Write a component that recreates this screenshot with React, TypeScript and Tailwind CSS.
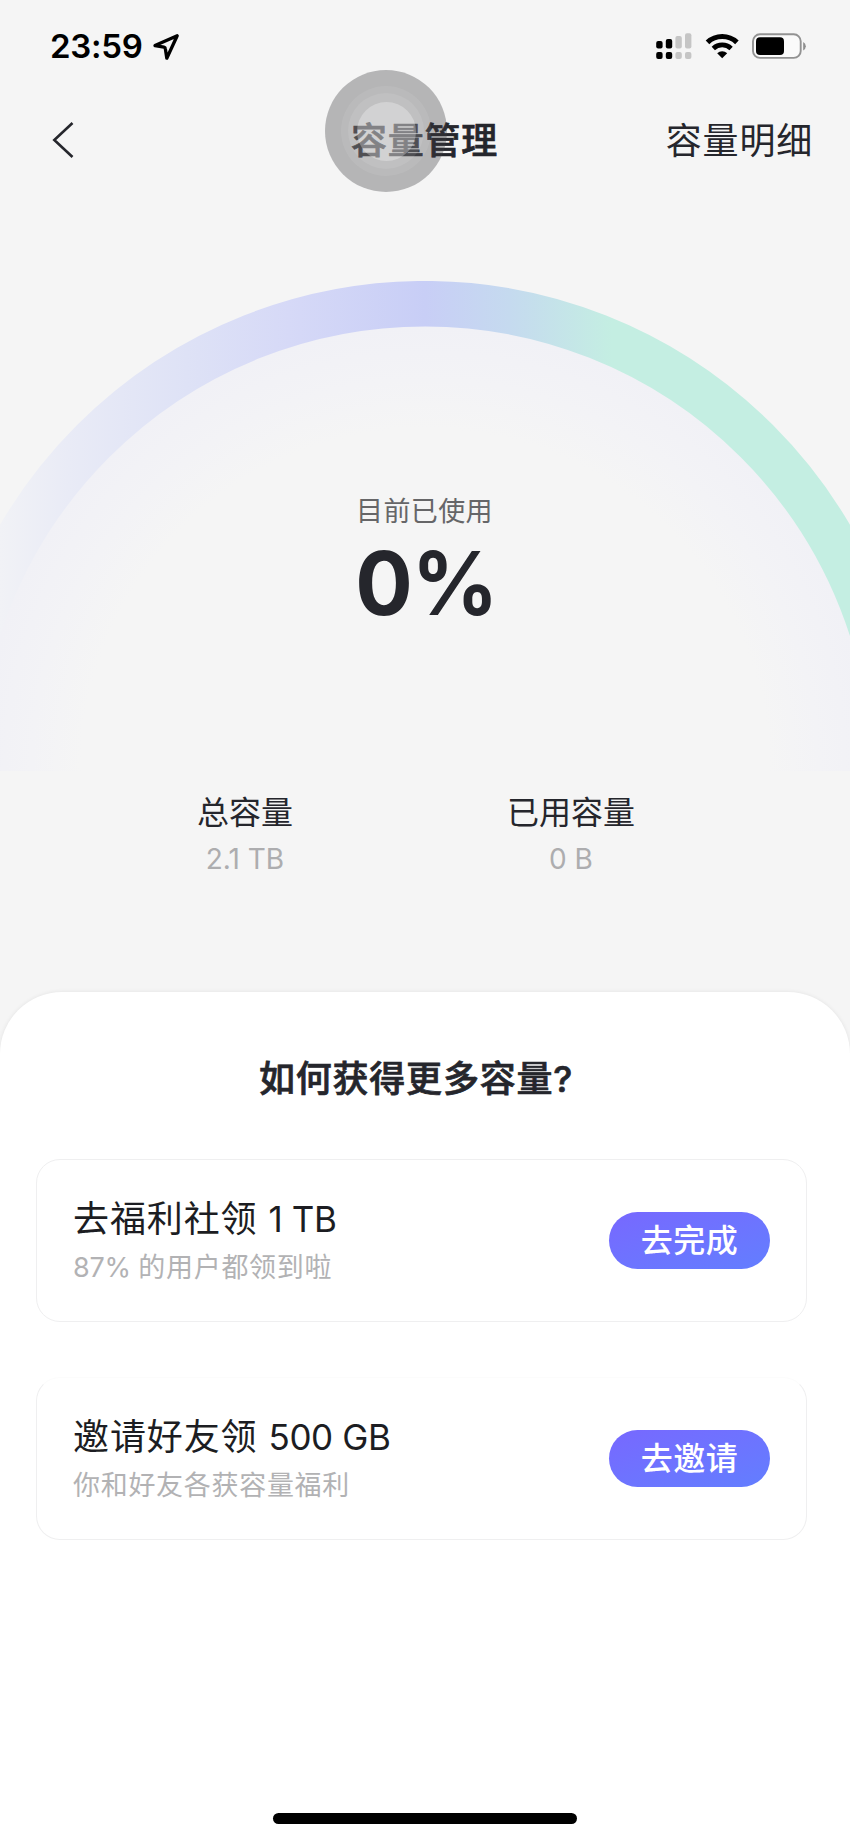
import React from 'react';

interface Task {
  title: string;
  amount: string;
  rate?: string;
  note: string;
  action: string;
  topBorder: boolean;
}

interface Stat {
  label: string;
  value: string;
}

const tasks: Task[] = [
  { title: '去福利社领', amount: '1 TB', rate: '87%', note: '的用户都领到啦', action: '去完成', topBorder: true },
  { title: '邀请好友领', amount: '500 GB', note: '你和好友各获容量福利', action: '去邀请', topBorder: false },
];

const stats: Stat[] = [
  { label: '总容量', value: '2.1 TB' },
  { label: '已用容量', value: '0 B' },
];

const StatusBar: React.FC = () => (
  <div className="flex h-[92px] items-center pl-[50px] pr-[44px] text-black">
    <span className="pt-px text-[33px] font-semibold leading-none tracking-[-0.3px]">23:59</span>
    <svg className="ml-[9px]" width="30" height="30" viewBox="151 31 30 30" fill="none">
      <path
        d="M177.2 35.7 155 45.6l9 1.5q1.2.2 1.3 1.3l1.5 9.8z"
        stroke="black"
        strokeWidth="3.3"
        strokeLinejoin="round"
      />
    </svg>
    <div className="ml-auto flex items-center">
      <svg width="36" height="28" viewBox="656 32 36 28">
        <rect x="656.2" y="41" width="6.4" height="7.6" rx="2" />
        <rect x="665.8" y="39" width="6.4" height="9.6" rx="2" />
        <rect x="656.2" y="52" width="6.4" height="7" rx="2" />
        <rect x="665.8" y="52" width="6.4" height="7" rx="2" />
        <g fill="#c5c5c5">
          <rect x="675.4" y="36" width="6.4" height="12.6" rx="2" />
          <rect x="685" y="33.3" width="6.4" height="15.3" rx="2" />
          <rect x="675.4" y="52" width="6.4" height="7" rx="2" />
          <rect x="685" y="52" width="6.4" height="7" rx="2" />
        </g>
      </svg>
      <svg className="ml-[13px]" width="34" height="28" viewBox="705 32 34 28" fill="none">
        <path d="M707.5 42.3a21.5 21.5 0 0 1 29.4 0" stroke="black" strokeWidth="5.2" />
        <path d="M713.3 48.4a13 13 0 0 1 17.8 0" stroke="black" strokeWidth="4.8" />
        <path d="M717.2 53.2a7.4 7.4 0 0 1 10 0l-5 5z" fill="black" />
      </svg>
      <svg className="ml-[12px]" width="55" height="28" viewBox="751 32 55 28">
        <rect x="753" y="34.3" width="47.7" height="23.6" rx="7" fill="#fafafa" stroke="#929292" strokeWidth="1.9" />
        <rect x="756" y="37.3" width="28" height="17.6" rx="4" />
        <path d="M803.2 42v8.4q2.6-1.4 2.6-4.2t-2.6-4.2" fill="#8e8e8e" />
      </svg>
    </div>
  </div>
);

const AssistiveTouch: React.FC = () => (
  <div className="absolute left-[325px] top-[70px] flex size-[122px] items-center justify-center rounded-full bg-[#3f3f42]/35">
    <div className="flex size-[90px] items-center justify-center rounded-full bg-white/8">
      <div className="flex size-[76px] items-center justify-center rounded-full bg-white/9">
        <div className="size-[59px] rounded-full bg-white/29" />
      </div>
    </div>
  </div>
);

const Header: React.FC = () => (
  <div className="grid h-[96px] grid-cols-3 items-center pl-[51px] pr-[37px] text-[36px] leading-none tracking-[0.8px] text-[#25262c]">
    <svg width="24" height="40" viewBox="51 120 24 40" fill="none">
      <path d="M72.5 123 54.3 140l18.2 17" stroke="currentColor" strokeWidth="2.6" />
    </svg>
    <h1 className="whitespace-nowrap pr-[15px] pt-[2px] text-center font-medium [-webkit-text-stroke:0.7px]">容量管理</h1>
    <span className="whitespace-nowrap pt-[2px] text-right">容量明细</span>
  </div>
);

const Gauge: React.FC = () => (
  <div className="relative mt-[93px] h-[490px]">
    <svg className="absolute inset-0" width="850" height="490" viewBox="0 0 850 490">
      <defs>
        <linearGradient id="ring" gradientUnits="userSpaceOnUse" x1="0" y1="0" x2="850" y2="0">
          <stop offset="0" stopColor="#f1f2f6" />
          <stop offset="0.08" stopColor="#e9ebf6" />
          <stop offset="0.22" stopColor="#dee2f6" />
          <stop offset="0.34" stopColor="#d6d9f7" />
          <stop offset="0.5" stopColor="#c8cef6" />
          <stop offset="0.6" stopColor="#c5daef" />
          <stop offset="0.72" stopColor="#c4eee2" />
          <stop offset="1" stopColor="#c4eee2" />
        </linearGradient>
        <radialGradient id="glow" gradientUnits="userSpaceOnUse" cx="425" cy="492" r="447">
          <stop offset="0.77" stopColor="#f5f5f5" />
          <stop offset="0.88" stopColor="#f3f3f6" />
          <stop offset="1" stopColor="#f1f1f6" />
        </radialGradient>
      </defs>
      <circle cx="425" cy="492" r="447" fill="url(#glow)" />
      <circle cx="425" cy="492" r="469.3" fill="none" stroke="url(#ring)" strokeWidth="45.5" />
    </svg>
    <div className="relative flex flex-col items-center pt-[215px]">
      <p className="pr-px text-[27px] leading-[32px] tracking-[0.4px] text-[#666668]">目前已使用</p>
      <p className="mt-[10px] scale-x-97 pl-[2px] text-[88px] font-bold leading-[90px] tracking-[-1px] text-[#25262c]">0%</p>
    </div>
  </div>
);

const App: React.FC = () => {
  return (
    <div className="relative flex h-[1840px] w-[850px] flex-col overflow-hidden bg-[#f5f5f5] font-['Inter','Noto_Sans_CJK_SC',sans-serif]">
      <StatusBar />
      <Header />
      <Gauge />

      <div className="mt-[22px] flex pl-[82px]">
        {stats.map((stat) => (
          <div key={stat.label} className="w-[326px] text-center">
            <p className="text-[32px] leading-[40px] text-[#25262c]">{stat.label}</p>
            <p className="mt-[8px] text-[28px] leading-[36px] text-[#adadaf]">{stat.value}</p>
          </div>
        ))}
      </div>

      <section className="mt-[115px] flex grow flex-col rounded-t-[62px] bg-white px-[36px] shadow-[0_0_4px_rgba(0,0,0,0.08)]">
        <h2 className="mt-[65px] pr-[18px] text-center text-[36px] font-medium leading-[44px] tracking-[0.8px] text-[#25262c] [-webkit-text-stroke:0.7px]">
          如何获得更多容量?
        </h2>
        <div className="mt-[58px] flex flex-col gap-[55px]">
          {tasks.map((task) => (
            <div
              key={task.title}
              className={`flex h-[163px] w-[771px] items-center justify-between rounded-[24px] border px-[36px] ${
                task.topBorder ? 'border-[#efeff0]' : 'border-[#efeff0] border-t-[#fcfcfc]'
              }`}
            >
              <div className="pt-[3px]">
                <p className="text-[36px] leading-[46px] tracking-[0.9px] text-[#1c1d22]">
                  {task.title} <span className="text-[35px] tracking-[-0.4px]">{task.amount}</span>
                </p>
                <p className="mt-[6px] text-[27px] leading-[40px] tracking-[0.7px] text-[#b2b2b4]">
                  {task.rate && <span className="tracking-[-0.2px]">{task.rate} </span>}
                  {task.note}
                </p>
              </div>
              <button className="h-[57px] w-[161px] rounded-full bg-linear-to-br from-[#7768ff] to-[#627eff] text-[32px] font-medium leading-none tracking-[0.5px] text-white">
                {task.action}
              </button>
            </div>
          ))}
        </div>
        <div className="mb-[16px] mt-auto h-[11px] w-[304px] self-center rounded-full bg-black" />
      </section>

      <AssistiveTouch />
    </div>
  );
};

export default App;
